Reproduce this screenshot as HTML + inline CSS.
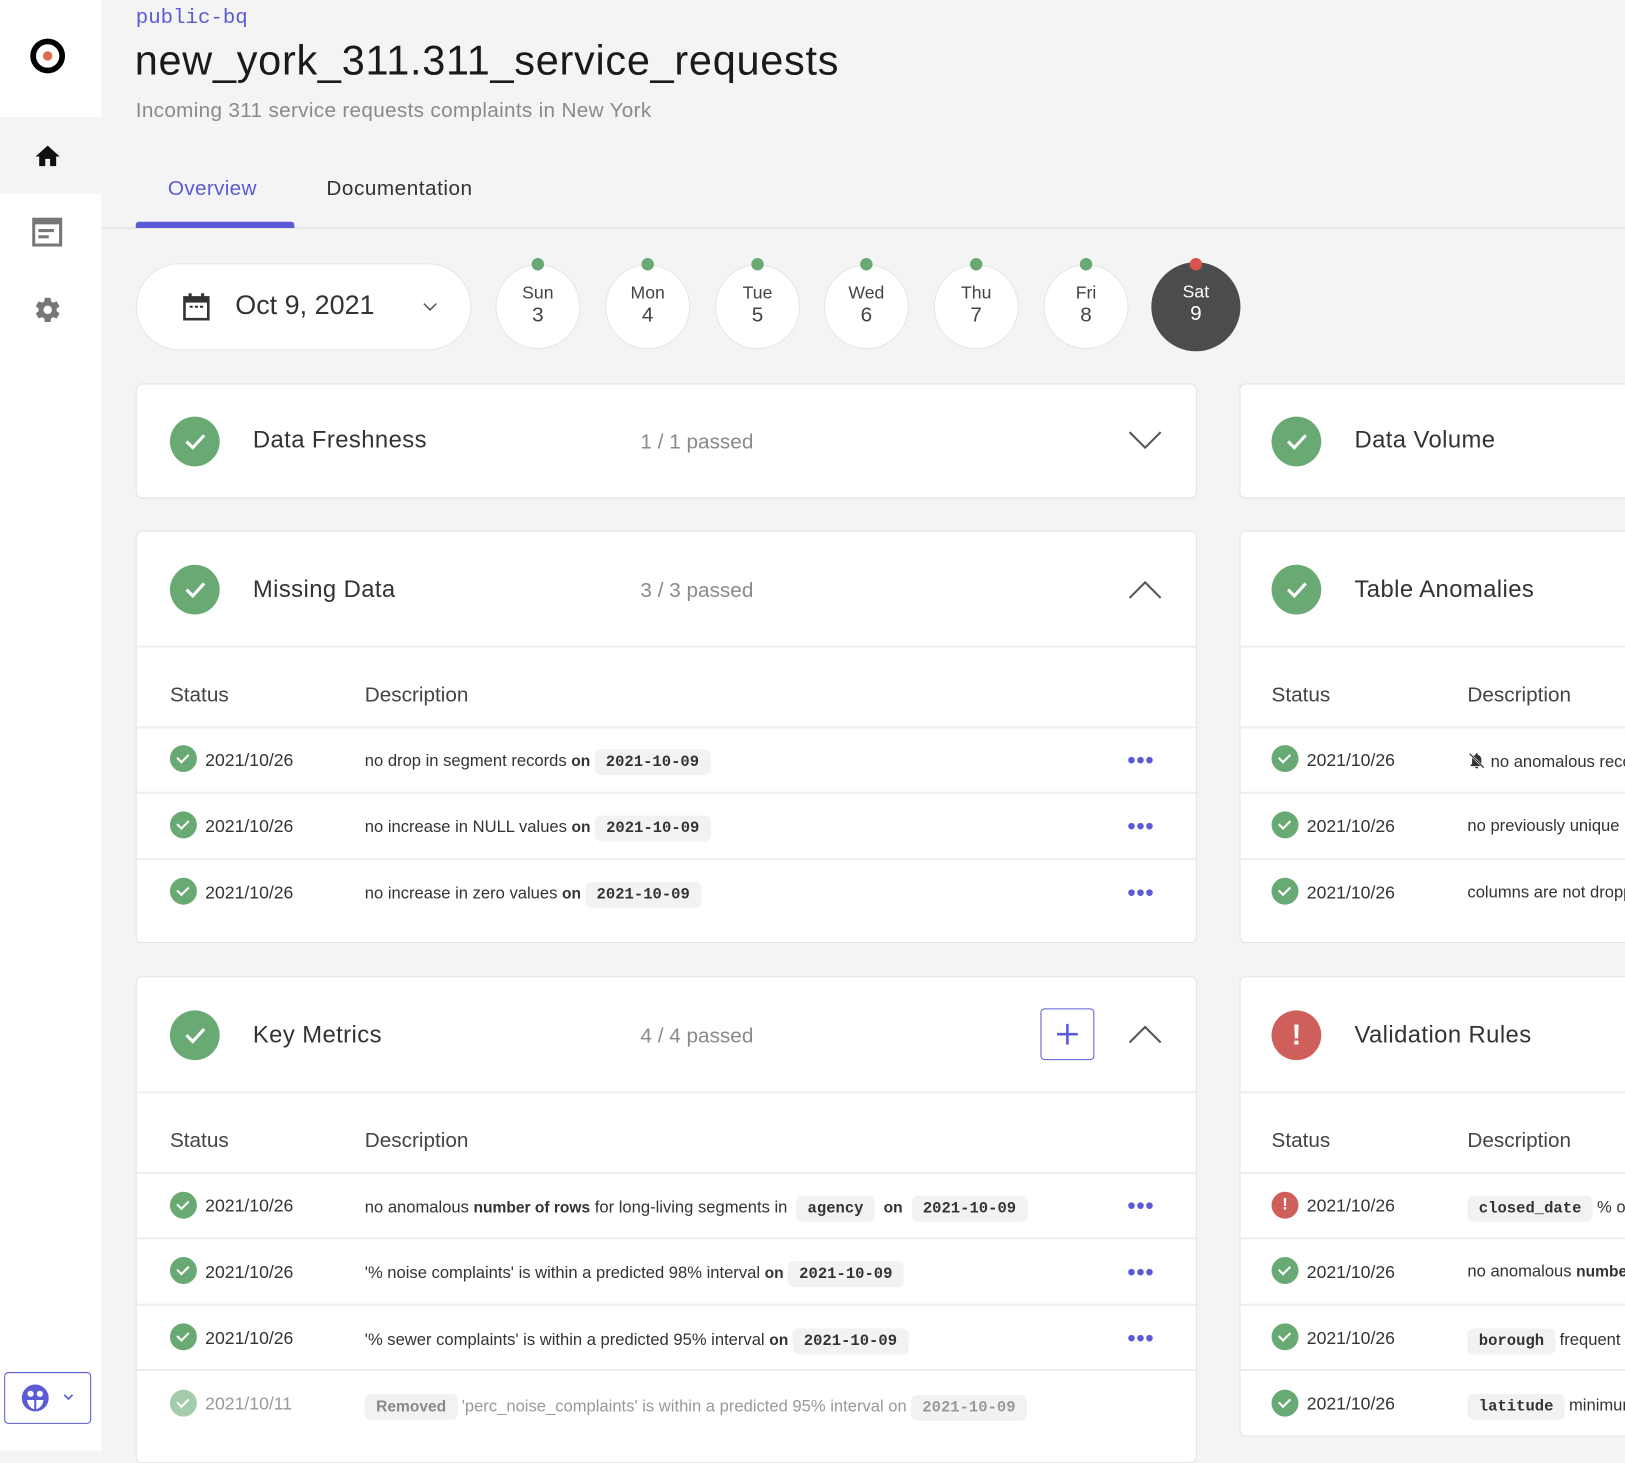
<!DOCTYPE html>
<html><head><meta charset="utf-8">
<style>
html,body{margin:0;padding:0;width:1625px;height:1440px;overflow:hidden;background:#f4f4f4;font-family:"Liberation Sans",sans-serif;color:#2b2b2b}
#w{position:absolute;left:0;top:0;width:1568px;height:1390px;transform:scale(1.0363);transform-origin:0 0}
.a{position:absolute}
.side{left:0;top:0;width:98px;height:1400px;background:#fff}
.card{background:#fff;border:1px solid #e4e4e4;border-radius:6px;box-sizing:border-box}
.ck{position:absolute;width:48px;height:48px;border-radius:50%;background:#68a974}
.ck svg{position:absolute;left:0;top:0}
.ttl{position:absolute;font-size:23px;color:#333}
.pass{position:absolute;font-size:20px;color:#8a8a8a}
.hl{position:absolute;left:0;right:0;height:2px;background:#eee}
.th{position:absolute;font-size:20px;color:#444}
.sm{position:absolute;width:26px;height:26px;border-radius:50%;background:#68a974;margin-top:-2px}
.sm.g::after{content:"";position:absolute;left:9px;top:6px;width:5px;height:9px;border:solid #fff;border-width:0 2px 2px 0;transform:rotate(45deg)}
.dt{position:absolute;font-size:17px;color:#333}
.ds{position:absolute;font-size:16px;color:#333;white-space:nowrap;margin-top:3px}
.ds b{font-weight:bold;font-size:15px}
.pill{display:inline-block;background:#f2f2f2;border-radius:6px;padding:4px 11px;font-family:"Liberation Mono",monospace;font-weight:bold;font-size:15px;color:#333;margin:0 4px}
.dots{position:absolute;color:#5b5bd6;font-size:22px;font-weight:bold;letter-spacing:1px;margin-top:2px}
.day{position:absolute;width:82px;height:82px;border-radius:50%;background:#fff;border:1px solid #e6e6e6;box-sizing:border-box;text-align:center;font-size:17px;color:#444}
.day .n{font-size:20px}
.gd{position:absolute;width:12px;height:12px;border-radius:50%;background:#68a974}
</style></head><body><div id="w">
<div class="a side"></div>
<div class="a" style="left:0;top:113px;width:98px;height:74px;background:#f4f4f4"></div>
<svg class="a" style="left:27px;top:35px" width="38" height="38"><circle cx="19" cy="19" r="14" fill="none" stroke="#000" stroke-width="5.5"/><circle cx="19" cy="19" r="4.5" fill="#e06a4a"/></svg>
<svg class="a" style="left:32px;top:137px" width="28" height="28" viewBox="0 0 24 24"><path d="M10 20v-6h4v6h5v-8h3L12 3 2 12h3v8z" fill="#111"/></svg>
<svg class="a" style="left:31px;top:210px" width="30" height="28" viewBox="0 0 30 28"><rect x="1.5" y="1.5" width="26" height="25" fill="none" stroke="#777" stroke-width="3"/><rect x="1.5" y="1.5" width="26" height="5" fill="#777"/><rect x="6" y="11" width="15" height="3" fill="#777"/><rect x="6" y="17" width="10" height="3" fill="#777"/></svg>
<svg class="a" style="left:32px;top:285px" width="28" height="28" viewBox="0 0 24 24"><path fill="#777" d="M19.4 13c.04-.3.06-.66.06-1s-.02-.7-.06-1l2.1-1.65c.2-.15.24-.42.12-.64l-2-3.460c-.12-.22-.39-.3-.61-.22l-2.49 1c-.52-.4-1.08-.73-1.690-.98l-.38-2.65A.49.49 0 0 0 14 2h-4c-.25 0-.46.18-.49.42l-.38 2.65c-.61.25-1.17.59-1.69.98l-2.49-1c-.23-.09-.49 0-.61.22l-2 3.46c-.13.22-.07.49.12.64L4.57 11c-.04.32-.07.66-.07 1s.03.68.07 1l-2.11 1.65c-.19.15-.24.42-.12.64l2 3.46c.12.22.39.3.61.22l2.49-1c.52.4 1.08.73 1.69.98l.38 2.65c.03.24.24.42.49.42h4c.25 0 .46-.18.49-.42l.38-2.65c.61-.25 1.17-.59 1.69-.98l2.49 1c.23.09.49 0 .61-.22l2-3.46c.12-.22.07-.49-.12-.64L19.4 13zM12 15.5A3.5 3.5 0 1 1 12 8.5a3.5 3.5 0 0 1 0 7z"/></svg>
<div class="a" style="left:4px;top:1324px;width:82px;height:48px;border:1.5px solid #5b5bd6;border-radius:4px;background:#fff"></div>
<svg class="a" style="left:20px;top:1335px" width="28" height="28"><circle cx="14" cy="14" r="13" fill="#5b5bd6"/><circle cx="9.5" cy="10" r="3" fill="#fff"/><circle cx="18.5" cy="10" r="3" fill="#fff"/><path d="M6 16h7v9q-6-2-7-9zM15 16h7q-1 7-7 9z" fill="#fff"/></svg>
<svg class="a" style="left:60px;top:1344px" width="12" height="8"><path d="M2 2l4 4 4-4" fill="none" stroke="#5b5bd6" stroke-width="1.6"/></svg>

<div class="a" style="left:131px;top:6px;font-family:'Liberation Mono',monospace;font-size:20px;color:#5b5bd6">public-bq</div>
<div class="a" style="left:130px;top:37px;font-size:40px;color:#1a1a1a;letter-spacing:0.7px">new_york_311.311_service_requests</div>
<div class="a" style="left:131px;top:96px;font-size:20px;color:#8a8a8a;letter-spacing:0.3px">Incoming 311 service requests complaints in New York</div>
<div class="a" style="left:162px;top:171px;font-size:20px;color:#5b5bd6;letter-spacing:0.3px">Overview</div>
<div class="a" style="left:315px;top:171px;font-size:20px;color:#333;letter-spacing:0.5px">Documentation</div>
<div class="a" style="left:98px;top:219px;width:1470px;height:2px;background:#e6e6e6"></div>
<div class="a" style="left:131px;top:214px;width:153px;height:6px;background:#5b5bd6;border-radius:3px 3px 0 0"></div>

<div class="a" style="left:131px;top:254px;width:324px;height:84px;background:#fff;border:1px solid #e6e6e6;border-radius:42px;box-sizing:border-box"></div>
<svg class="a" style="left:176px;top:282px" width="27" height="28" viewBox="0 0 27 28"><rect x="2" y="5" width="23" height="21" fill="none" stroke="#333" stroke-width="2.5"/><rect x="2" y="5" width="23" height="5" fill="#333"/><rect x="6" y="1" width="3" height="6" fill="#333"/><rect x="18" y="1" width="3" height="6" fill="#333"/><rect x="7" y="13" width="3" height="2" fill="#333"/><rect x="12" y="13" width="3" height="2" fill="#333"/><rect x="17" y="13" width="3" height="2" fill="#333"/></svg>
<div class="a" style="left:227px;top:279px;font-size:26px;color:#333">Oct 9, 2021</div>
<svg class="a" style="left:407px;top:291px" width="16" height="10"><path d="M2 2l6 6 6-6" fill="none" stroke="#555" stroke-width="1.5"/></svg>

<div class="day" style="left:478px;top:255px"><div style="margin-top:17px">Sun</div><div class="n">3</div></div>
<div class="day" style="left:584px;top:255px"><div style="margin-top:17px">Mon</div><div class="n">4</div></div>
<div class="day" style="left:690px;top:255px"><div style="margin-top:17px">Tue</div><div class="n">5</div></div>
<div class="day" style="left:795px;top:255px"><div style="margin-top:17px">Wed</div><div class="n">6</div></div>
<div class="day" style="left:901px;top:255px"><div style="margin-top:17px">Thu</div><div class="n">7</div></div>
<div class="day" style="left:1007px;top:255px"><div style="margin-top:17px">Fri</div><div class="n">8</div></div>
<div class="day" style="left:1111px;top:253px;width:86px;height:86px;background:#4b4c4e;border:none;color:#fff"><div style="margin-top:19px">Sat</div><div class="n">9</div></div>
<div class="gd" style="left:513px;top:249px"></div><div class="gd" style="left:619px;top:249px"></div><div class="gd" style="left:725px;top:249px"></div><div class="gd" style="left:830px;top:249px"></div><div class="gd" style="left:936px;top:249px"></div><div class="gd" style="left:1042px;top:249px"></div><div class="gd" style="left:1148px;top:249px;background:#d9534f"></div>

<div class="a card" style="left:131px;top:370px;width:1024px;height:111px">
 <div class="ck" style="left:32px;top:31px"><svg width="48" height="48"><path d="M16 24l6 6 11-12" fill="none" stroke="#fff" stroke-width="3"/></svg></div>
 <div class="ttl" style="left:112px;top:40px;letter-spacing:0.4px">Data Freshness</div>
 <div class="pass" style="left:486px;top:45px">1 / 1 passed</div>
 <svg class="a" style="left:957px;top:45px" width="32" height="18"><path d="M1 1l15 15 15-15" fill="none" stroke="#555" stroke-width="2"/></svg>
</div>

<div class="a card" style="left:131px;top:512px;width:1024px;height:398px">
 <div class="ck" style="left:32px;top:32px"><svg width="48" height="48"><path d="M16 24l6 6 11-12" fill="none" stroke="#fff" stroke-width="3"/></svg></div>
 <div class="ttl" style="left:112px;top:42px;letter-spacing:0.4px">Missing Data</div>
 <div class="pass" style="left:486px;top:46px">3 / 3 passed</div>
 <svg class="a" style="left:957px;top:47px" width="32" height="18"><path d="M1 17l15-15 15 15" fill="none" stroke="#555" stroke-width="2"/></svg>
 <div class="hl" style="top:110px"></div>
 <div class="th" style="left:32px;top:147px">Status</div><div class="th" style="left:220px;top:147px">Description</div>
 <div class="hl" style="top:188px"></div>
 <div class="sm g" style="left:32px;top:208px"></div><div class="dt" style="left:66px;top:211px">2021/10/26</div>
 <div class="ds" style="left:220px;top:207px">no drop in segment records <b>on</b><span class="pill">2021-10-09</span></div><div class="dots" style="left:956px;top:206px">•••</div>
 <div class="hl" style="top:251px"></div>
 <div class="sm g" style="left:32px;top:272px"></div><div class="dt" style="left:66px;top:275px">2021/10/26</div>
 <div class="ds" style="left:220px;top:271px">no increase in NULL values <b>on</b><span class="pill">2021-10-09</span></div><div class="dots" style="left:956px;top:270px">•••</div>
 <div class="hl" style="top:315px"></div>
 <div class="sm g" style="left:32px;top:336px"></div><div class="dt" style="left:66px;top:339px">2021/10/26</div>
 <div class="ds" style="left:220px;top:335px">no increase in zero values <b>on</b><span class="pill">2021-10-09</span></div><div class="dots" style="left:956px;top:334px">•••</div>
</div>

<div class="a card" style="left:131px;top:942px;width:1024px;height:470px">
 <div class="ck" style="left:32px;top:32px"><svg width="48" height="48"><path d="M16 24l6 6 11-12" fill="none" stroke="#fff" stroke-width="3"/></svg></div>
 <div class="ttl" style="left:112px;top:42px;letter-spacing:0.4px">Key Metrics</div>
 <div class="pass" style="left:486px;top:46px">4 / 4 passed</div>
 <div class="a" style="left:872px;top:30px;width:50px;height:48px;border:1.5px solid #5b5bd6;border-radius:4px"></div>
 <svg class="a" style="left:887px;top:44px" width="22" height="22"><path d="M11 1v20M1 11h20" stroke="#5b5bd6" stroke-width="2.5"/></svg>
 <svg class="a" style="left:957px;top:46px" width="32" height="18"><path d="M1 17l15-15 15 15" fill="none" stroke="#555" stroke-width="2"/></svg>
 <div class="hl" style="top:110px"></div>
 <div class="th" style="left:32px;top:147px">Status</div><div class="th" style="left:220px;top:147px">Description</div>
 <div class="hl" style="top:188px"></div>
 <div class="sm g" style="left:32px;top:209px"></div><div class="dt" style="left:66px;top:211px">2021/10/26</div>
 <div class="ds" style="left:220px;top:208px">no anomalous <b>number of rows</b> for long-living segments in <span class="pill">agency</span> <b>on</b> <span class="pill">2021-10-09</span></div><div class="dots" style="left:956px;top:206px">•••</div>
 <div class="hl" style="top:251px"></div>
 <div class="sm g" style="left:32px;top:272px"></div><div class="dt" style="left:66px;top:275px">2021/10/26</div>
 <div class="ds" style="left:220px;top:271px">'% noise complaints' is within a predicted 98% interval <b>on</b><span class="pill">2021-10-09</span></div><div class="dots" style="left:956px;top:270px">•••</div>
 <div class="hl" style="top:315px"></div>
 <div class="sm g" style="left:32px;top:336px"></div><div class="dt" style="left:66px;top:339px">2021/10/26</div>
 <div class="ds" style="left:220px;top:336px">'% sewer complaints' is within a predicted 95% interval <b>on</b><span class="pill">2021-10-09</span></div><div class="dots" style="left:956px;top:334px">•••</div>
 <div class="hl" style="top:378px"></div>
 <div class="sm g" style="left:32px;top:400px;opacity:.6"></div><div class="dt" style="left:66px;top:402px;color:#999">2021/10/11</div>
 <div class="ds" style="left:220px;top:399px;color:#999"><span class="pill" style="font-family:'Liberation Sans',sans-serif;color:#888;margin-left:0">Removed</span>'perc_noise_complaints' is within a predicted 95% interval on<span class="pill" style="color:#999">2021-10-09</span></div>
</div>

<div class="a card" style="left:1196px;top:370px;width:420px;height:111px">
 <div class="ck" style="left:30px;top:31px"><svg width="48" height="48"><path d="M16 24l6 6 11-12" fill="none" stroke="#fff" stroke-width="3"/></svg></div>
 <div class="ttl" style="left:110px;top:40px;letter-spacing:0.4px">Data Volume</div>
</div>
<div class="a card" style="left:1196px;top:512px;width:420px;height:398px">
 <div class="ck" style="left:30px;top:32px"><svg width="48" height="48"><path d="M16 24l6 6 11-12" fill="none" stroke="#fff" stroke-width="3"/></svg></div>
 <div class="ttl" style="left:110px;top:42px;letter-spacing:0.4px">Table Anomalies</div>
 <div class="hl" style="top:110px"></div>
 <div class="th" style="left:30px;top:147px">Status</div><div class="th" style="left:219px;top:147px">Description</div>
 <div class="hl" style="top:188px"></div>
 <div class="sm g" style="left:30px;top:208px"></div><div class="dt" style="left:64px;top:211px">2021/10/26</div>
 <div class="ds" style="left:219px;top:209px"><svg width="18" height="18" viewBox="0 0 24 24" style="vertical-align:-3px"><path d="M12 22a2 2 0 0 0 2-2h-4a2 2 0 0 0 2 2zm6-6V11c0-3-1.6-5.6-4.5-6.3V4a1.5 1.5 0 0 0-3 0v.7C7.6 5.4 6 8 6 11v5l-2 2v1h16v-1z" fill="#333"/><path d="M3 3l18 18" stroke="#fff" stroke-width="3"/><path d="M3 3l18 18" stroke="#333" stroke-width="1.6"/></svg> no anomalous records</div>
 <div class="hl" style="top:251px"></div>
 <div class="sm g" style="left:30px;top:272px"></div><div class="dt" style="left:64px;top:275px">2021/10/26</div>
 <div class="ds" style="left:219px;top:273px">no previously unique</div>
 <div class="hl" style="top:315px"></div>
 <div class="sm g" style="left:30px;top:336px"></div><div class="dt" style="left:64px;top:339px">2021/10/26</div>
 <div class="ds" style="left:219px;top:337px">columns are not dropped</div>
</div>
<div class="a card" style="left:1196px;top:942px;width:420px;height:444px">
 <div class="ck" style="left:30px;top:32px;background:#cf5f5a;color:#fff;text-align:center;font-size:28px;font-weight:bold;line-height:48px">!</div>
 <div class="ttl" style="left:110px;top:42px;letter-spacing:0.4px">Validation Rules</div>
 <div class="hl" style="top:110px"></div>
 <div class="th" style="left:30px;top:147px">Status</div><div class="th" style="left:219px;top:147px">Description</div>
 <div class="hl" style="top:188px"></div>
 <div class="sm" style="left:30px;top:209px;background:#cf5f5a;color:#fff;text-align:center;font-size:16px;font-weight:bold;line-height:26px">!</div><div class="dt" style="left:64px;top:211px">2021/10/26</div>
 <div class="ds" style="left:219px;top:208px"><span class="pill" style="margin-left:0">closed_date</span>% of</div>
 <div class="hl" style="top:251px"></div>
 <div class="sm g" style="left:30px;top:272px"></div><div class="dt" style="left:64px;top:275px">2021/10/26</div>
 <div class="ds" style="left:219px;top:273px">no anomalous <b>number</b></div>
 <div class="hl" style="top:315px"></div>
 <div class="sm g" style="left:30px;top:336px"></div><div class="dt" style="left:64px;top:339px">2021/10/26</div>
 <div class="ds" style="left:219px;top:336px"><span class="pill" style="margin-left:0">borough</span>frequent</div>
 <div class="hl" style="top:378px"></div>
 <div class="sm g" style="left:30px;top:400px"></div><div class="dt" style="left:64px;top:402px">2021/10/26</div>
 <div class="ds" style="left:219px;top:399px"><span class="pill" style="margin-left:0">latitude</span>minimum</div>
 <div class="hl" style="top:442px"></div>
</div>
</div></body></html>
